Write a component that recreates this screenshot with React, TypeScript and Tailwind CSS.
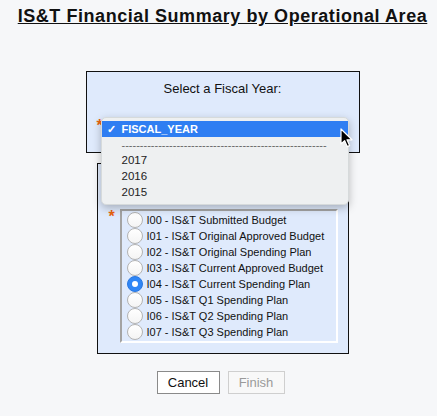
import React from "react";

const versions = [
  "I00 - IS&T Submitted Budget",
  "I01 - IS&T Original Approved Budget",
  "I02 - IS&T Original Spending Plan",
  "I03 - IS&T Current Approved Budget",
  "I04 - IS&T Current Spending Plan",
  "I05 - IS&T Q1 Spending Plan",
  "I06 - IS&T Q2 Spending Plan",
  "I07 - IS&T Q3 Spending Plan",
];

const years = ["2017", "2016", "2015"];

function Radio({ checked }: { checked: boolean }) {
  if (checked) {
    return (
      <span className="flex h-[16px] w-[16px] shrink-0 items-center justify-center rounded-full bg-[#2f86f6] border border-[#2a78e0]">
        <span className="h-[6px] w-[6px] rounded-full bg-white" />
      </span>
    );
  }
  return (
    <span className="h-[16px] w-[16px] shrink-0 rounded-full border border-[#b3b3b3] bg-gradient-to-b from-white to-[#f4f4f4]" />
  );
}

function Cursor() {
  return (
    <svg
      className="absolute left-[253px] top-[56px]"
      width="14"
      height="21"
      viewBox="0 0 14 21"
    >
      <path
        d="M1 1 L1 16 L4.6 12.6 L7.2 18.6 L9.6 17.6 L7 11.8 L12 11.8 Z"
        fill="#000"
        stroke="#fff"
        strokeWidth="1.2"
        strokeLinejoin="round"
      />
    </svg>
  );
}

export default function App() {
  return (
    <div className="min-h-[416px] bg-[#f6f7f9] pl-2 font-['Liberation_Sans',Arial,sans-serif] text-[#111]">
      <h1 className="pt-[5px] text-center text-[18px] leading-[22px] font-bold tracking-[0.55px] underline text-[#111]">
        IS&amp;T Financial Summary by Operational Area
      </h1>

      {/* fiscal year box */}
      <div className="relative z-10 mx-auto mt-[44px] h-[82px] w-[274px] border border-[#111] bg-[#dfeafc]">
        <p className="pt-[9px] text-center text-[13px] leading-[16px]">
          Select a Fiscal Year:
        </p>
        <div className="mt-[21px] flex pl-[10px]">
          <span className="text-[16px] leading-[16px] font-bold text-[#e8630f]">*</span>
        </div>

        {/* open select menu */}
        <div className="absolute left-[14px] top-[45px] h-[88px] w-[248px] rounded-[5px] border border-[#d6dadb] bg-[#eef0f1] pt-[3px] shadow-[0_3px_8px_rgba(0,0,0,0.25)]">
          <div className="flex h-[16px] items-center gap-[6px] bg-[#2f7ef2] pl-[5px] text-[11px] font-bold text-white">
            <span className="w-[9px] text-[11px]">✓</span>
            FISCAL_YEAR
          </div>
          <div className="flex h-[16px] items-center pl-[20px] text-[11px] text-[#666]">
            --------------------------------------------------------
          </div>
          {years.map((y) => (
            <div
              key={y}
              className="flex h-[16px] items-center pl-[20px] text-[11.5px] text-[#222]"
            >
              {y}
            </div>
          ))}
        </div>
        <Cursor />
      </div>

      {/* version box */}
      <div className="mx-auto mt-[10px] flex h-[191px] w-[252px] border border-[#111] bg-[#dfeafc] pl-[11px] pt-[45px]">
        <span className="w-[11px] text-[16px] leading-[16px] font-bold text-[#e8630f]">*</span>
        <div className="h-[134px] w-[218px] border-2 border-t-[#a3a3a3] border-l-[#a3a3a3] border-b-white border-r-white pl-[5px] pt-[1px]">
          {versions.map((v, i) => (
            <div key={v} className="flex h-[16px] items-center gap-[4px]">
              <Radio checked={i === 4} />
              <span className="whitespace-nowrap text-[11px] leading-[16px]">{v}</span>
            </div>
          ))}
        </div>
      </div>

      <div className="mt-[17px] flex justify-center gap-[8px] pr-[4px]">
        <button className="h-[23px] w-[63px] border border-[#8a8a8a] bg-white text-[13px] text-[#111]">
          Cancel
        </button>
        <button
          disabled
          className="h-[23px] w-[57px] border border-[#cfcfcf] bg-[#f8f8f8] text-[13px] text-[#9a9a9a]"
        >
          Finish
        </button>
      </div>
    </div>
  );
}
